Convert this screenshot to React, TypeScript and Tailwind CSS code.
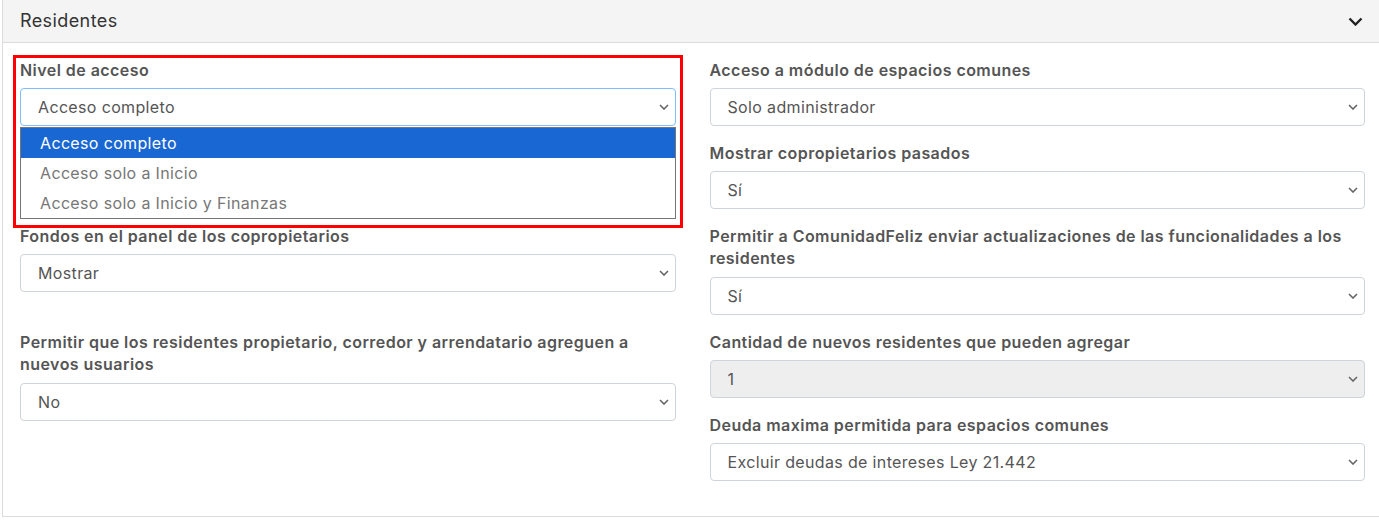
import React from 'react';

const font = { fontFamily: 'Inter, "Noto Sans", sans-serif' };

function Chevron({ className = '' }: { className?: string }) {
  return (
    <svg viewBox="0 0 10 6" className={className} fill="none" stroke="currentColor" strokeWidth="1.6">
      <path d="M1 1l4 4 4-4" />
    </svg>
  );
}

function Select({ value, focused, disabled }: { value: string; focused?: boolean; disabled?: boolean }) {
  return (
    <div
      className={
        'flex h-[38px] items-center justify-between rounded-[4px] border pl-[17px] pr-[6px] text-[16px] tracking-[0.35px] text-[#555] ' +
        (focused ? 'border-[#80bdff] ' : 'border-[#ced4da] ') +
        (disabled ? 'bg-[#eeeeee]' : 'bg-white')
      }
    >
      <span>{value}</span>
      <Chevron className="h-[6px] w-[10px] text-[#666]" />
    </div>
  );
}

function Label({ children, two }: { children: React.ReactNode; two?: boolean }) {
  return (
    <div className={'-mt-[1px] text-[16px] font-semibold leading-[22px] tracking-[0.45px] text-[#555] ' + (two ? 'mb-[8px]' : 'mb-[7px]')}>
      {children}
    </div>
  );
}

function Field({ label, value, disabled, last, two }: { label: React.ReactNode; value: string; disabled?: boolean; last?: boolean; two?: boolean }) {
  return (
    <div className={last ? '' : 'pb-[17px]'}>
      <Label two={two}>{label}</Label>
      <Select value={value} disabled={disabled} />
    </div>
  );
}

export default function App() {
  const options = ['Acceso completo', 'Acceso solo a Inicio', 'Acceso solo a Inicio y Finanzas'];
  return (
    <div className="w-full overflow-hidden bg-white" style={font}>
      <div className="ml-[2px] w-[1390px] border-x border-b border-[#dcdcdc]">
        <div className="flex h-[43px] w-[1377px] items-center justify-between border-b border-[#dcdcdc] bg-[#f4f4f4] pl-[17px] pr-[17px]">
          <span className="-mt-[2px] text-[18px] tracking-[0.4px] text-[#333]">Residentes</span>
          <Chevron className="h-[9px] w-[15px] text-[#222]" />
        </div>
        <div className="grid w-[1362px] grid-cols-2 gap-x-[34px] pb-[35px] pl-[17px] pt-[17px]">
          {/* row 1 */}
          <div className="relative">
            <div className="pointer-events-none absolute left-[-7px] right-[-7px] top-[-5px] h-[173px] border-[3px] border-[#ff0000]" />
            <Label>Nivel de acceso</Label>
            <Select value="Acceso completo" focused />
            <div className="mt-[1px] border border-[#767676] bg-white text-[16px] tracking-[0.35px]">
              {options.map((o, i) => (
                <div
                  key={o}
                  className={
                    'flex h-[30px] items-center pl-[19px] ' +
                    (i === 0 ? 'bg-[#1967d2] text-white' : 'text-[#777]')
                  }
                >
                  {o}
                </div>
              ))}
            </div>
          </div>
          <div>
            <Field label="Acceso a módulo de espacios comunes" value="Solo administrador" />
            <Field label="Mostrar copropietarios pasados" value="Sí" />
          </div>
          {/* row 2 */}
          <div>
            <Field label="Fondos en el panel de los copropietarios" value="Mostrar" />
          </div>
          <div>
            <Field
              two
              label={<>Permitir a ComunidadFeliz enviar actualizaciones de las funcionalidades a los<br />residentes</>}
              value="Sí"
            />
          </div>
          {/* row 3 */}
          <div>
            <Field
              two
              label={<>Permitir que los residentes propietario, corredor y arrendatario agreguen a<br />nuevos usuarios</>}
              value="No"
              last
            />
          </div>
          <div>
            <Field label="Cantidad de nuevos residentes que pueden agregar" value="1" disabled />
            <Field label="Deuda maxima permitida para espacios comunes" value="Excluir deudas de intereses Ley 21.442" last />
          </div>
        </div>
      </div>
    </div>
  );
}
